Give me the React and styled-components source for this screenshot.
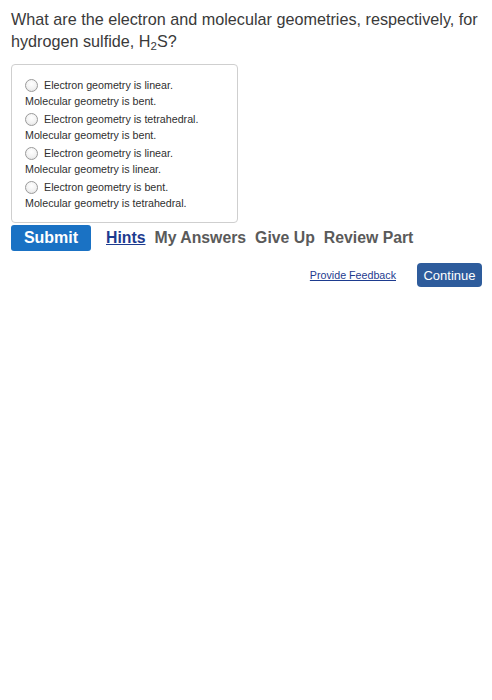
import { createGlobalStyle, styled } from "styled-components"

const Global = createGlobalStyle`
    body {
        margin: 0;
        background: #ffffff;
        font-family: "Liberation Sans", Arial, sans-serif;
    }
`

const Page = styled.div`
    padding: 8px 8px 0 11px;
    width: 473px;
`

const Question = styled.p`
    margin: 0;
    font-size: 16.2px;
    line-height: 22px;
    color: #3a3a3a;
    sub {
        font-size: 11.5px;
        vertical-align: baseline;
        position: relative;
        top: 3px;
        line-height: 1;
    }
`

const Choices = styled.div`
    margin-top: 12px;
    width: 227px;
    box-sizing: border-box;
    border: 1px solid #cfcfcf;
    border-radius: 4px;
    padding: 12px 10px 11px 13px;
`

const Choice = styled.label`
    display: block;
    font-size: 10.7px;
    line-height: 15px;
    color: #2f2f2f;
    margin-bottom: 2px;
    &:last-child {
        margin-bottom: 0;
    }
    .first {
        display: flex;
        align-items: center;
        gap: 6px;
        height: 17px;
    }
`

const Radio = styled.span`
    display: inline-block;
    width: 11px;
    height: 11px;
    border-radius: 50%;
    border: 1px solid #9a9a9a;
    background: radial-gradient(circle at 50% 35%, #ffffff 0%, #f2f2f2 55%, #dcdcdc 100%);
    flex-shrink: 0;
`

const Actions = styled.div`
    display: flex;
    align-items: center;
    margin-top: 2px;
    gap: 9px;
`

const Submit = styled.button`
    width: 80px;
    height: 26px;
    border: none;
    border-radius: 3px;
    background: #1a72c4;
    color: #fff;
    font-family: inherit;
    font-weight: bold;
    font-size: 16px;
    padding: 0;
    margin-right: 6px;
`

const ActionLink = styled.span`
    font-weight: bold;
    font-size: 15.8px;
    color: ${p => (p.$active ? "#1d3b8f" : "#5a5a5a")};
    text-decoration: ${p => (p.$active ? "underline" : "none")};
`

const Footer = styled.div`
    display: flex;
    justify-content: flex-end;
    align-items: center;
    gap: 21px;
    margin-top: 12px;
    padding-right: 2px;
`

const Feedback = styled.a`
    font-size: 10.7px;
    color: #1d3b8f;
    text-decoration: underline;
`

const Continue = styled.button`
    width: 65px;
    height: 24px;
    border: none;
    border-radius: 4px;
    background: #2e5c9c;
    color: #fff;
    font-family: inherit;
    font-size: 13px;
    padding: 0;
`

const options = [
    ["Electron geometry is linear.", "Molecular geometry is bent."],
    ["Electron geometry is tetrahedral.", "Molecular geometry is bent."],
    ["Electron geometry is linear.", "Molecular geometry is linear."],
    ["Electron geometry is bent.", "Molecular geometry is tetrahedral."],
]

export default function App() {
    return <Page>
        <Global />
        <Question>
            What are the electron and molecular geometries, respectively, for hydrogen sulfide, H<sub>2</sub>S?
        </Question>
        <Choices>
            {options.map(([a, b], i) => (
                <Choice key={i}>
                    <div className="first"><Radio />{a}</div>
                    <div>{b}</div>
                </Choice>
            ))}
        </Choices>
        <Actions>
            <Submit>Submit</Submit>
            <ActionLink $active>Hints</ActionLink>
            <ActionLink>My Answers</ActionLink>
            <ActionLink>Give Up</ActionLink>
            <ActionLink>Review Part</ActionLink>
        </Actions>
        <Footer>
            <Feedback>Provide Feedback</Feedback>
            <Continue>Continue</Continue>
        </Footer>
    </Page>
}
